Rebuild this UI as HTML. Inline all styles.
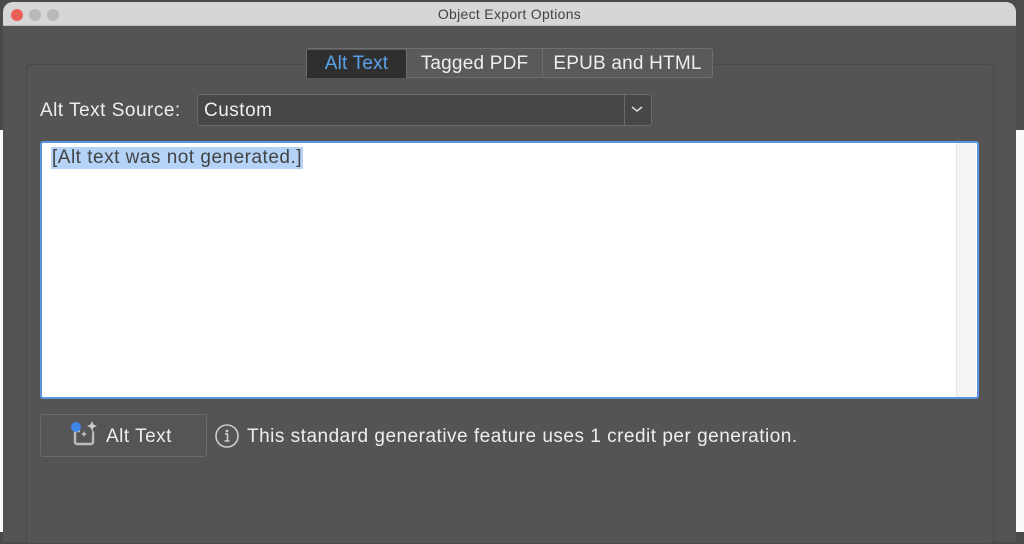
<!DOCTYPE html>
<html><head><meta charset="utf-8"><style>
*{margin:0;padding:0;box-sizing:border-box}
body{width:1024px;height:532px;overflow:hidden;background:#4a4a4a;font-family:"Liberation Sans",sans-serif;position:relative}
.abs{position:absolute}
.t{font-size:19px;letter-spacing:0.5px;color:#eee}
</style></head><body>
<div class="abs" style="left:0;top:130px;width:4px;height:402px;background:#fafafa"></div>
<div class="abs" style="left:1016px;top:130px;width:8px;height:402px;background:#fafafa"></div>
<div class="abs" style="left:1016px;top:0;width:8px;height:130px;background:#4d4d4d"></div>
<div class="abs" style="left:3px;top:2px;width:1013px;height:540px;background:#535353;border-radius:10px 10px 0 0;overflow:hidden">
 <div class="abs" style="left:0;top:0;width:1013px;height:24px;background:#d6d6d6;border-bottom:1px solid #bcbcbc"></div>
 <div class="abs" style="left:8px;top:7px;width:12px;height:12px;border-radius:50%;background:#ec5f56"></div>
 <div class="abs" style="left:26px;top:7px;width:12px;height:12px;border-radius:50%;background:#b9b9b9"></div>
 <div class="abs" style="left:44px;top:7px;width:12px;height:12px;border-radius:50%;background:#b9b9b9"></div>
 <div class="abs" style="left:0;top:4px;width:1013px;text-align:center;font-size:14px;letter-spacing:0.3px;color:#444">Object Export Options</div>
</div>
<div class="abs" style="left:26px;top:64px;width:968px;height:480px;border:1px solid #4a4a4a;border-radius:4px;background:#545454"></div>
<div class="abs" style="left:306px;top:48px;width:407px;height:30px;background:#5a5a5a;border:1px solid #6e6e6e;border-radius:3px"></div>
<div class="abs t" style="left:307px;top:50px;width:99px;height:28px;background:#2f2f2f;color:#5aa2ea;line-height:28px;text-align:center;letter-spacing:0.2px">Alt Text</div>
<div class="abs" style="left:406px;top:49px;width:1px;height:28px;background:#6e6e6e"></div>
<div class="abs t" style="left:407px;top:50px;width:135px;height:28px;line-height:28px;text-align:center;letter-spacing:0.2px">Tagged PDF</div>
<div class="abs" style="left:542px;top:49px;width:1px;height:28px;background:#6e6e6e"></div>
<div class="abs t" style="left:543px;top:50px;width:169px;height:28px;line-height:28px;text-align:center;letter-spacing:0.2px">EPUB and HTML</div>
<div class="abs t" style="left:40px;top:100px">Alt Text Source:</div>
<div class="abs" style="left:197px;top:94px;width:455px;height:32px;background:#474747;border:1px solid #6a6a6a;border-radius:3px"></div>
<div class="abs" style="left:624px;top:95px;width:1px;height:30px;background:#6a6a6a"></div>
<div class="abs t" style="left:204px;top:100px">Custom</div>
<svg class="abs" style="left:630px;top:104px" width="14" height="10"><path d="M2 3l5 4 5-4" fill="none" stroke="#ddd" stroke-width="1.5"/></svg>
<div class="abs" style="left:40px;top:141px;width:939px;height:258px;background:#fff;border:2px solid #5c94e0;border-radius:3px"></div>
<div class="abs" style="left:956px;top:143px;width:20px;height:254px;background:#f4f4f4;border-left:1px solid #e6e6e6"></div>
<div class="abs t" style="left:51px;top:147px;height:22px;background:#b4d3f7;color:#444;line-height:22px;padding:0 1px">[Alt text was not generated.]</div>
<div class="abs" style="left:40px;top:414px;width:167px;height:43px;border:1px solid #6a6a6a;border-radius:3px;background:#555"></div>
<svg class="abs" style="left:68px;top:418px" width="32" height="34"><rect x="7" y="13" width="18" height="13" rx="2" fill="none" stroke="#bbb" stroke-width="2.5"/><rect x="12" y="10" width="12" height="10" fill="#555"/><circle cx="8" cy="9" r="5" fill="#3d86e8"/><path d="M24 3l1.5 3.5 3.5 1.5-3.5 1.5-1.5 3.5-1.5-3.5-3.5-1.5 3.5-1.5z" fill="#ccc"/><path d="M16 13l1 2 2 1-2 1-1 2-1-2-2-1 2-1z" fill="#bbb"/></svg>
<div class="abs t" style="left:106px;top:426px">Alt Text</div>
<svg class="abs" style="left:214px;top:423px" width="26" height="26"><circle cx="13" cy="13" r="11" fill="none" stroke="#ccc" stroke-width="1.6"/><circle cx="13" cy="8" r="1.4" fill="#ccc"/><path d="M11 11h2.5v7M10.5 18h5" fill="none" stroke="#ccc" stroke-width="1.6"/></svg>
<div class="abs t" style="left:247px;top:426px">This standard generative feature uses 1 credit per generation.</div>
</body></html>
